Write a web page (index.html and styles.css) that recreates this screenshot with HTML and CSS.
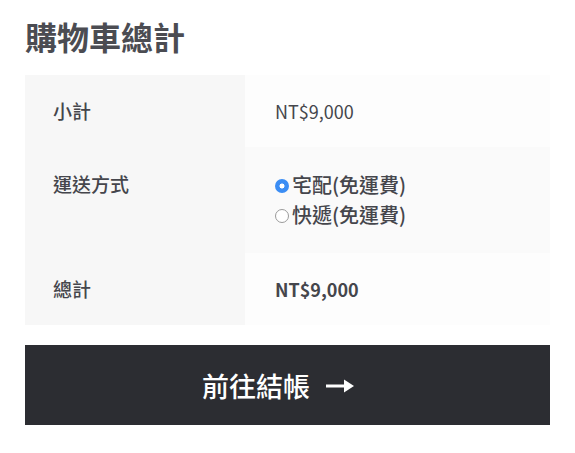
FILE: index.html
```html
<!DOCTYPE html>
<html lang="zh-Hant">
<head>
<meta charset="utf-8">
<title>購物車總計</title>
<link rel="stylesheet" href="styles.css">
</head>
<body>
<div class="cart-totals">
  <h2 class="title">購物車總計</h2>
  <table class="totals">
    <tr class="row">
      <th class="label">小計</th>
      <td class="value">NT$9,000</td>
    </tr>
    <tr class="row row-alt">
      <th class="label">運送方式</th>
      <td class="value">
        <label class="option"><input type="radio" name="ship" class="radio" checked>宅配(免運費)</label>
        <label class="option"><input type="radio" name="ship" class="radio">快遞(免運費)</label>
      </td>
    </tr>
    <tr class="row">
      <th class="label">總計</th>
      <td class="value strong">NT$9,000</td>
    </tr>
  </table>
  <a class="checkout" href="#">前往結帳
    <svg class="arrow" width="28" height="16" viewBox="0 0 28 16"><path d="M0 6.5h19v3H0z" fill="#fff"/><path d="M18 1.5L28 8 18 14.5z" fill="#fff"/></svg>
  </a>
</div>
</body>
</html>
```
FILE: styles.css
```css
* { box-sizing: border-box; }
html, body { margin: 0; padding: 0; background: #fff; }
body {
  font-family: "Noto Sans CJK TC", "Noto Sans", sans-serif;
  color: #45464c;
  width: 575px;
}
.cart-totals { padding: 16px 25px 0; }
.title {
  margin: 0 0 19px;
  font-size: 32px;
  line-height: 40px;
  font-weight: 700;
  color: #4b4c52;
}
.totals {
  width: 525px;
  border-collapse: collapse;
  border-spacing: 0;
}
.label {
  width: 220px;
  background: #f7f7f7;
  text-align: left;
  vertical-align: top;
  font-weight: 500;
  font-size: 19px;
  line-height: 26px;
  padding: 23px 28px;
  color: #45464c;
}
.value {
  background: #fdfdfd;
  font-size: 18px;
  line-height: 26px;
  padding: 23px 30px;
  vertical-align: top;
  font-weight: 400;
}
.row-alt .value { background: #fafafa; }
.row-alt .label { padding-top: 24px; }
.strong { font-weight: 700; }
.option {
  display: flex;
  align-items: center;
  height: 30px;
  font-weight: 500;
  font-size: 20px;
  color: #45464c;
}
.radio {
  -webkit-appearance: none;
  appearance: none;
  width: 14px;
  height: 14px;
  margin: 2px 3px 0 0;
  border-radius: 50%;
  border: 1px solid #9a9a9a;
  background: #fff;
  flex: none;
}
.radio:checked {
  border: none;
  background: radial-gradient(circle, #fff 0 2.2px, #3b8df4 2.8px);
}
.checkout {
  margin-top: 20px;
  display: flex;
  align-items: center;
  justify-content: center;
  gap: 16px;
  height: 80px;
  padding-right: 19px;
  background: #2c2d32;
  color: #fff;
  text-decoration: none;
  font-size: 27px;
  font-weight: 500;
}
.arrow { display: block; margin-top: 2px; }
```
